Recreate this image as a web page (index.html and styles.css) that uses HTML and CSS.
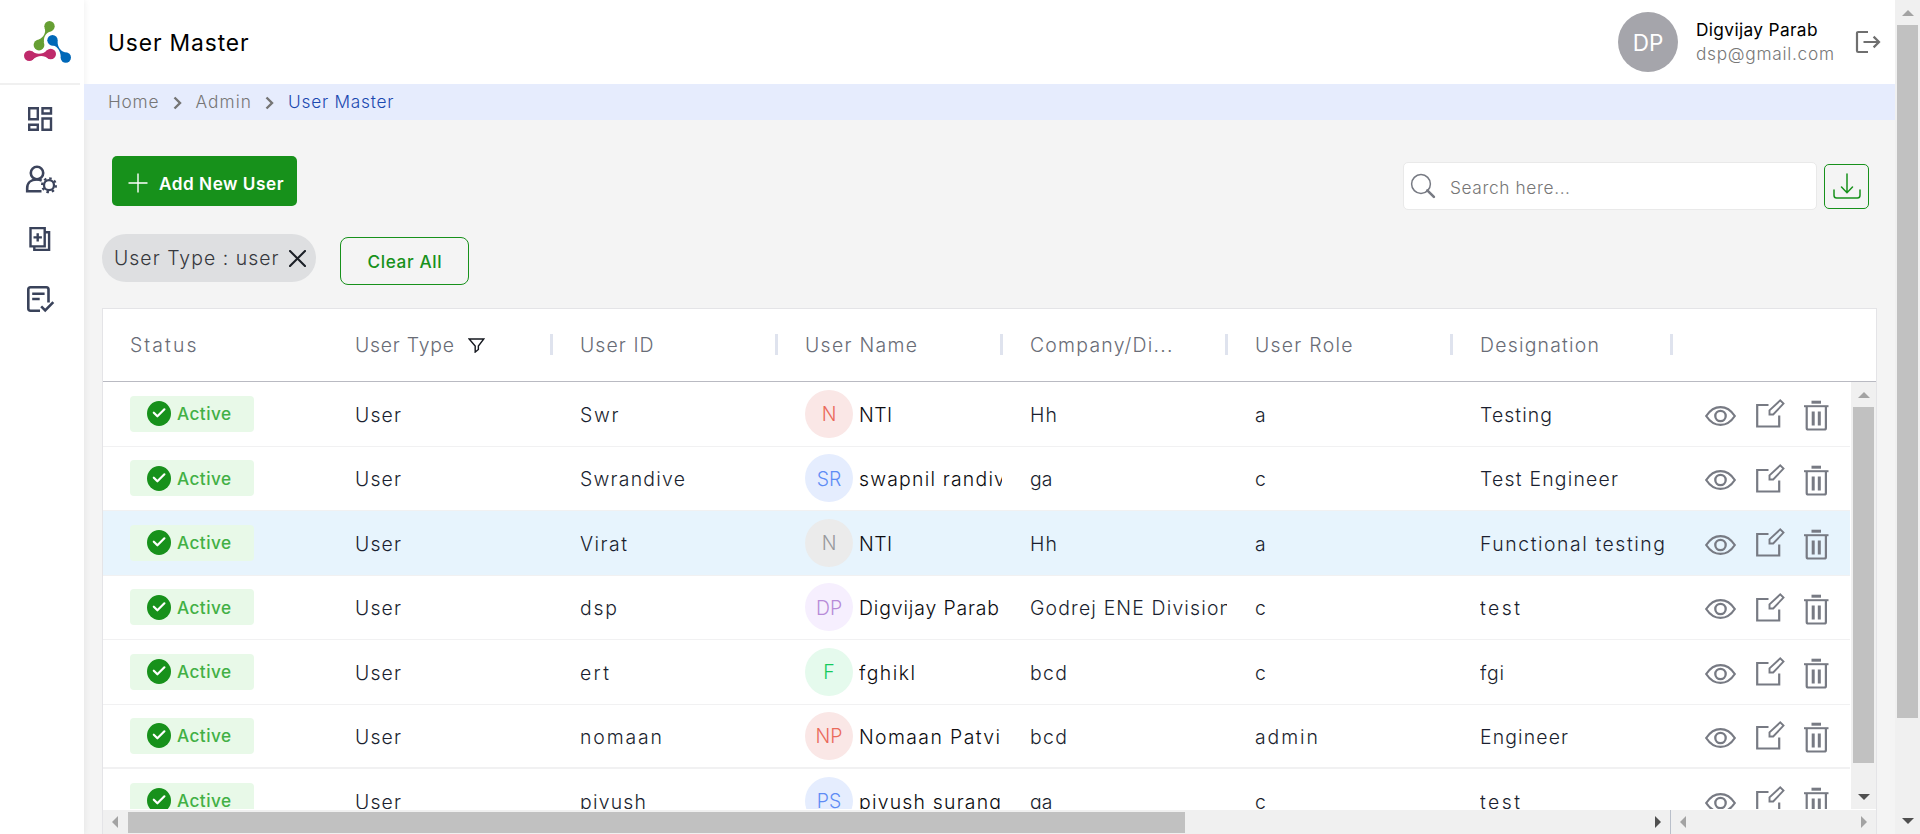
FILE: index.html
```html
<!DOCTYPE html>
<html lang="en">
<head>
<meta charset="utf-8">
<title>User Master</title>
<link rel="stylesheet" href="styles.css">
</head>
<body>
<svg width="0" height="0" class="defs" aria-hidden="true">
  <symbol id="i-check" viewBox="0 0 24 25"><ellipse cx="12" cy="12.5" rx="12" ry="12.5" fill="#17911b"/><path d="M6.800 11.700l3.600 3.600 7-7" fill="none" stroke="#fff" stroke-width="2.200" stroke-linecap="round" stroke-linejoin="round"/></symbol>
  <symbol id="i-eye" viewBox="0 0 31 20"><path d="M1.200 10C5 4.200 10 1.100 15.500 1.100S26 4.200 29.800 10C26 15.800 21 18.900 15.500 18.900S5 15.800 1.200 10z" fill="none" stroke="#777a83" stroke-width="2.200"/><circle cx="15.500" cy="10" r="5.200" fill="none" stroke="#777a83" stroke-width="2.300"/></symbol>
  <symbol id="i-edit" viewBox="0 0 29 29"><g fill="none" stroke="#777a83" stroke-width="2.200"><path d="M12.500 6H1.200v21.500h22V16.500"/><path d="M13.500 15.500v-4.200L24.200 1.400l3.300 3.200L17.200 15.500z" stroke-width="1.900"/></g></symbol>
  <symbol id="i-trash" viewBox="0 0 25 31"><g fill="none" stroke="#777a83"><path d="M7.500 2.200h9.500" stroke-width="3"/><path d="M0 6.200h24.500" stroke-width="2"/><path d="M2.700 6.500v21.500q0 1.500 1.500 1.500h16.200q1.500 0 1.500-1.500V6.500" stroke-width="2.200"/><path d="M9.200 11.500v14M15.300 11.500v14" stroke-width="3"/></g></symbol>
</svg>
<div class="app">
  <aside class="sidebar">
    <div class="brand">
      <svg width="48" height="42" viewBox="0 0 48 42">
        <g fill="#669f33"><circle cx="25.500" cy="5.200" r="5.200"/><circle cx="15" cy="24" r="5.400"/><path d="M20.600 7c1.800 4.500-1 9.500-6 11.600l5.500 3.500c-.8-6 1.200-9.800 6.900-11.800z"/></g>
        <g fill="#0068b8"><circle cx="28.500" cy="19.200" r="5.200"/><circle cx="41.800" cy="36.500" r="5.200"/><path d="M27 24.200c5.500 0 9.300 4.500 9.800 11.500l4.400-4.400c-4.800-.8-7.600-5.500-7.700-11z"/></g>
        <g fill="#bf2a6b"><circle cx="5.300" cy="34.700" r="5.300"/><circle cx="26.700" cy="33" r="5.300"/><path d="M7.500 29.800c4.300 4.200 11.200 4.200 15.700-.8l1.600 8.800c-5.300-4-10.800-3.800-16.800 1.200z"/></g>
      </svg>
    </div>
    <nav class="menu">
      <svg width="32" height="32" viewBox="0 0 32 32" fill="none" stroke="#3c445c" stroke-width="2.400"><path d="M5.200 5.200h8.600v11.100H5.200zM18.500 5.200h8.500v5.300h-8.500zM5.200 21.700h8.600v5.100H5.200zM18.500 15.500h8.500v11.300h-8.500z"/></svg>
      <svg width="34" height="32" viewBox="0 0 34 32" fill="none" stroke="#3c445c" stroke-width="2.600"><circle cx="13" cy="10" r="6.200"/><path d="M17.500 28.300H3.200V25c0-5 3.600-8.500 9.500-8.500 2 0 3.500.4 5 1.100"/><circle cx="25" cy="22.200" r="5" stroke-width="2.300"/><circle cx="25" cy="22.200" r="6.900" stroke-width="2.200" stroke-dasharray="2.500 2.919"/></svg>
      <svg width="32" height="32" viewBox="0 0 32 32" fill="none" stroke="#39425a" stroke-width="2.400"><path d="M6.500 5.100h14.200v18.300H6.500zM10.300 23.400v3.500h14.800V9.200h-4M13.700 10.200v8.400M9.500 14.400h8.400"/></svg>
      <svg width="32" height="32" viewBox="0 0 32 32" fill="none" stroke="#39425a" stroke-width="2.600"><path d="M16 27.700H6.500q-2.200 0-2.200-2.200V6.500q0-2.200 2.200-2.200h15.800q2.200 0 2.200 2.200v13M8.200 10.800h12.400M8.200 16h7.500M17.200 23.300l4 4 8.100-8.200"/></svg>
    </nav>
  </aside>

  <main class="main">
    <header class="topbar">
      <h1 class="title" data-w="140.500">User Master</h1>
      <div class="account">
        <div class="me">DP</div>
        <div class="who">
          <div class="who-name"><span data-w="121.500">Digvijay Parab</span></div>
          <div class="who-mail"><span data-w="138">dsp@gmail.com</span></div>
        </div>
        <svg width="26" height="24" viewBox="0 0 26 24" fill="none" stroke="#6f6f6f" stroke-width="2.200"><path d="M13 2H3.200Q2 2 2 3.200v17.600Q2 22 3.200 22H13M8.500 12h15.500M18.600 6.600l5.400 5.400-5.400 5.400"/></svg>
      </div>
    </header>

    <div class="crumbs">
      <span data-w="50.500">Home</span>
      <svg class="chev" width="9" height="14" viewBox="0 0 9 14"><path d="M1.500 1.500L7 7l-5.500 5.500" fill="none" stroke="#757575" stroke-width="2.400"/></svg>
      <span data-w="55.500">Admin</span>
      <svg class="chev" width="9" height="14" viewBox="0 0 9 14"><path d="M1.500 1.500L7 7l-5.500 5.500" fill="none" stroke="#757575" stroke-width="2.400"/></svg>
      <span class="here" data-w="105.500">User Master</span>
    </div>

    <section class="content">
      <div class="tools">
        <button class="add">
          <svg width="20" height="20" viewBox="0 0 20 20"><path d="M10 .5v19M.5 10h19" stroke="#fff" stroke-width="1.400"/></svg>
          <span data-w="124.500">Add New User</span>
        </button>
        <div class="find">
          <div class="search">
            <svg width="26" height="26" viewBox="0 0 26 26" fill="none" stroke="#777a83"><circle cx="11" cy="11" r="9.400" stroke-width="1.500"/><path d="M17.300 17.300l6.600 6.600" stroke-width="2.600" stroke-linecap="round"/></svg>
            <span data-w="120">Search here...</span>
          </div>
          <button class="download">
            <svg width="28" height="26" viewBox="0 0 28 26" fill="none" stroke="#17911b" stroke-width="1.500" stroke-linecap="round"><path d="M14 1v18.500M8.500 14l5.500 5.700 5.500-5.700M1 17v5.200Q1 25 3.600 25h20.800q2.600 0 2.600-2.800V17"/></svg>
          </button>
        </div>
      </div>
      <div class="filters">
        <div class="chip">
          <span data-w="164.500">User Type : user</span>
          <svg width="17" height="17" viewBox="0 0 17 17"><path d="M1 1l15 15M16 1L1 16" stroke="#1c2027" stroke-width="2.100" stroke-linecap="round"/></svg>
        </div>
        <button class="clear"><span data-w="74">Clear All</span></button>
      </div>

      <div class="grid">
        <div class="grid-head">
          <div class="th plain"><span data-w="66.500">Status</span></div>
          <div class="th"><span data-w="99">User Type</span><svg class="funnel" width="17" height="15" viewBox="0 0 18 16"><path d="M1.200 1h15.600L11 8.500v3.700L7.600 15V8.500z" fill="none" stroke="#15181f" stroke-width="1.500"/></svg></div>
          <div class="th"><span data-w="73.500">User ID</span></div>
          <div class="th"><span data-w="112">User Name</span></div>
          <div class="th"><span data-w="142.500">Company/Di...</span></div>
          <div class="th"><span data-w="97.500">User Role</span></div>
          <div class="th last"><span data-w="119">Designation</span></div>
        </div>
        <div class="grid-body">
          <div class="rows" id="rows"></div>
          <div class="vbar">
            <i class="tri up dim"></i><div class="thumb"></div><i class="tri down"></i>
          </div>
        </div>
        <div class="hbars">
          <div class="hbar wide"><i class="tri left dim"></i><div class="thumb"></div><i class="tri right"></i></div>
          <div class="hbar pinned"><i class="tri left dim"></i><i class="tri right dim"></i></div>
        </div>
      </div>
    </section>
  </main>

  <div class="page-bar"><i class="tri up dim"></i><div class="thumb"></div><i class="tri down"></i></div>
</div>
<script src="app.js"></script>
</body>
</html>
```
FILE: styles.css
```css
* { box-sizing: border-box; }
html, body { margin: 0; height: 100%; overflow: hidden; }
body { font-family: Inter, "Open Sans", sans-serif; font-size: 19.400px; font-weight: 350; color: #1b1f30; background: #f4f4f4; }
button { font: inherit; margin: 0; }
svg { display: block; flex: none; }
span { white-space: nowrap; }
.defs { position: absolute; }
.app { display: flex; height: 834px; overflow: hidden; }

.sidebar { width: 84px; flex: none; background: #fff; box-shadow: 0 0 7px rgba(0, 0, 0, .08); position: relative; z-index: 1; clip-path: inset(0 -10px 0 0); }
.brand { width: 80px; height: 85px; border-bottom: 2px solid #f0f0f0; padding: 21px 0 0 24px; }
.menu { display: flex; flex-direction: column; gap: 28px; padding: 18px 0 0 24px; }

.main { width: 1811px; flex: none; display: flex; flex-direction: column; }
.topbar { height: 84px; flex: none; background: #fff; display: flex; align-items: center; justify-content: space-between; padding: 0 14px 0 24px; }
.title { margin: 0; font-size: 22.800px; font-weight: 430; color: #000; }
.account { display: flex; align-items: center; }
.me { width: 60px; height: 60px; border-radius: 50%; background: #a5a5ab; color: #fff; font-size: 22.500px; font-weight: 400; display: grid; place-items: center; margin-right: 18px; }
.who { width: 159px; font-size: 17.300px; line-height: 24px; }
.who-name { color: #000; font-weight: 400; }
.who-mail { color: #777; }

.crumbs { height: 36px; flex: none; position: relative; z-index: 2; background: #e6ecfd; display: flex; align-items: center; padding: 0 0 1px 24px; font-size: 17.300px; color: #767676; }
.crumbs .chev { margin: 2px 14px 0; }
.crumbs .here { color: #1b49b0; }

.content { flex: 1; min-height: 0; display: flex; flex-direction: column; padding: 36px 18px 0; }
.tools { display: flex; justify-content: space-between; padding: 0 8px 0 10px; height: 54px; }
.add { width: 185px; height: 50px; border: 0; border-radius: 5px; background: #17911b; color: #fff; font-size: 17.200px; font-weight: 600; display: flex; align-items: center; gap: 11px; padding: 4px 0 0 16px; }
.find { display: flex; align-items: center; gap: 7px; padding-top: 6px; }
.search { width: 414px; height: 48px; border: 1px solid #e9e9e9; border-radius: 5px; background: #fff; display: flex; align-items: center; gap: 14px; padding-left: 6px; font-size: 17.300px; color: #767676; }
.search span { padding-top: 2px; }
.download { width: 45px; height: 45px; padding: 0; border: 1.300px solid #17911b; border-radius: 5px; background: #f4f4f4; display: grid; place-items: center; }
.filters { display: flex; gap: 24px; padding-top: 24px; height: 98px; }
.chip { width: 214px; height: 48px; border-radius: 24px; background: #dedfe1; color: #36383d; display: flex; align-items: center; justify-content: space-between; padding: 0 10px 0 12px; }
.clear { width: 129px; height: 48px; margin-top: 3px; border: 1.300px solid #17911b; border-radius: 8px; background: none; color: #17911b; font-size: 17.200px; font-weight: 500; padding: 0; }

.grid { width: 1775px; flex: 1; min-height: 0; background: #fff; border: 1px solid #e4e4e7; border-bottom: 0; display: flex; flex-direction: column; }
.grid-head { height: 73px; flex: none; display: flex; border-bottom: 1px solid #b9bac2; padding-left: 27px; }
.th { width: 225px; display: flex; align-items: center; color: #696c76; position: relative; }
.th::after { content: ""; position: absolute; left: 195px; top: 25px; width: 3px; height: 21px; background: #dfe3ee; }
.th.plain::after { display: none; }
.th.last::after { left: 190px; }
.funnel { margin-left: 14px; margin-top: 0; }
.grid-body { height: 427px; flex: none; display: flex; overflow: hidden; }
.rows { width: 1747px; flex: none; }
.row { height: 64.500px; width: 1747px; border-bottom: 1px solid #f1f1f2; display: flex; align-items: center; padding-left: 27px; }
.row:nth-child(6) { border-bottom-width: 2px; }
.row.hot { background: #e7f4fd; }
.cell { width: 225px; padding-right: 28px; display: flex; align-items: center; }
.cell .clip { overflow: hidden; width: 197px; flex: none; padding-top: 1.500px; }
.badge { width: 124px; height: 36px; border-radius: 4px; background: #e8f9e8; color: #42b045; font-size: 17.200px; font-weight: 500; display: flex; align-items: center; gap: 6px; padding-left: 17px; }
.avatar { width: 48px; height: 48px; border-radius: 50%; flex: none; display: grid; place-items: center; margin-right: 6px; padding-top: 1px; }
.avatar.red { background: #fae7e6; color: #ea6a5b; }
.avatar.blue { background: #e5edfe; color: #5e8cf5; }
.avatar.gray { background: #ebebeb; color: #98999d; }
.avatar.violet { background: #f6effe; color: #b78ad8; }
.avatar.green { background: #e5faed; color: #15ca5c; }
.cell .name { width: 143px; color: #0c0c0f; }
.actions { display: flex; align-items: center; padding-top: 4px; }
.actions .edit { margin: -4px 19px 0 20px; }

.vbar { width: 25px; margin-left: 1px; height: 427px; background: #f0f0f0; display: flex; flex-direction: column; align-items: center; padding: 10px 0 9px; flex: none; }
.vbar .thumb { width: 21px; height: 356px; margin-top: 9px; background: #c1c1c1; }
.vbar .down { margin-top: auto; }
.hbars { height: 24px; margin-top: 1px; flex: none; display: flex; background: #f0f0f0; }
.hbar { display: flex; align-items: center; }
.wide { width: 1568px; padding: 0 9px; border-right: 1px solid #b9bfca; }
.wide .thumb { width: 1057px; height: 21px; margin-left: 10px; background: #c1c1c1; }
.wide .right { margin-left: auto; }
.pinned { flex: 1; justify-content: space-between; padding: 0 9px; }
.page-bar { width: 25px; flex: none; background: #f0f0f0; display: flex; flex-direction: column; align-items: center; padding: 10px 0; }
.page-bar .thumb { width: 21px; height: 693px; margin-top: 9px; background: #c1c1c1; }
.page-bar .down { margin-top: auto; }

.tri { width: 0; height: 0; border: 6px solid transparent; flex: none; }
.tri.up { border-top: 0; border-bottom-color: #505050; }
.tri.down { border-bottom: 0; border-top-color: #505050; }
.tri.left { border-left: 0; border-right-color: #505050; }
.tri.right { border-right: 0; border-left-color: #505050; }
.tri.up.dim { border-bottom-color: #a3a3a3; }
.tri.left.dim { border-right-color: #a3a3a3; }
.tri.right.dim { border-left-color: #a3a3a3; }
```
FILE: app.js
```js
// Each text is paired with the width it should occupy in its cell.
const users = [
  { id: ['Swr', 38.5], tone: 'red', initials: 'N', name: ['NTI', 33], company: ['Hh', 27], role: ['a', 11], job: ['Testing', 72] },
  { id: ['Swrandive', 105], tone: 'blue', initials: 'SR', name: ['swapnil randive', 158], company: ['ga', 22.5], role: ['c', 11], job: ['Test Engineer', 138] },
  { id: ['Virat', 47], tone: 'gray', initials: 'N', name: ['NTI', 33], company: ['Hh', 27], role: ['a', 11], job: ['Functional testing', 185], hot: true },
  { id: ['dsp', 37], tone: 'violet', initials: 'DP', name: ['Digvijay Parab', 140], company: ['Godrej ENE Division', 201], role: ['c', 11], job: ['test', 40] },
  { id: ['ert', 29], tone: 'green', initials: 'F', name: ['fghikl', 56], company: ['bcd', 37], role: ['c', 11], job: ['fgi', 24] },
  { id: ['nomaan', 82], tone: 'red', initials: 'NP', name: ['Nomaan Patvi', 141], company: ['bcd', 37], role: ['admin', 63], job: ['Engineer', 88] },
  { id: ['piyush', 66], tone: 'blue', initials: 'PS', name: ['piyush surang', 142], company: ['ga', 22.5], role: ['c', 11], job: ['test', 40] }
];

const text = ([t, w]) => `<span data-w="${w}">${t}</span>`;
const cell = (pair) => `<div class="cell"><div class="clip">${text(pair)}</div></div>`;

document.getElementById('rows').innerHTML = users.map((u) => `
  <div class="row${u.hot ? ' hot' : ''}">
    <div class="cell"><div class="badge"><svg width="24" height="25"><use href="#i-check"/></svg>${text(['Active', 54])}</div></div>
    ${cell(['User', 46])}
    ${cell(u.id)}
    <div class="cell"><div class="avatar ${u.tone}">${u.initials}</div><div class="clip name">${text(u.name)}</div></div>
    ${cell(u.company)}
    ${cell(u.role)}
    ${cell(u.job)}
    <div class="actions">
      <svg width="31" height="20"><use href="#i-eye"/></svg>
      <svg class="edit" width="29" height="29"><use href="#i-edit"/></svg>
      <svg width="25" height="31"><use href="#i-trash"/></svg>
    </div>
  </div>`).join('');

document.querySelectorAll('[data-w]').forEach((el) => {
  const n = el.textContent.length;
  if (n < 2) return;
  const range = document.createRange();
  range.selectNodeContents(el);
  const natural = range.getBoundingClientRect().width;
  const gap = (Number(el.dataset.w) - natural) / (n - 1);
  el.style.letterSpacing = gap + 'px';
  el.style.marginRight = -gap + 'px';
});
```
